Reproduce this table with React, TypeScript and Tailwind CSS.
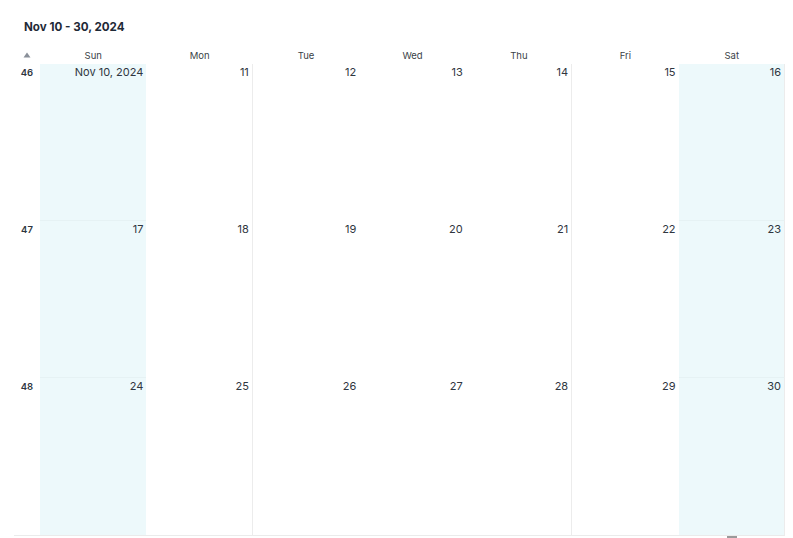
import React from 'react';

const days = ['Sun', 'Mon', 'Tue', 'Wed', 'Thu', 'Fri', 'Sat'];

const weeks = [
  { num: 46, dates: ['Nov 10, 2024', '11', '12', '13', '14', '15', '16'] },
  { num: 47, dates: ['17', '18', '19', '20', '21', '22', '23'] },
  { num: 48, dates: ['24', '25', '26', '27', '28', '29', '30'] },
];

const colBorder = (i: number) => {
  if (i === 1 || i === 4 || i === 6) return 'border-r border-[#ececec]';
  return '';
};

export default function App() {
  return (
    <div className="w-[793px] h-[538px] bg-white overflow-hidden relative" style={{ fontFamily: 'Inter, "Noto Sans", sans-serif' }}>
      <div className="pl-[14px] pr-[8px]">
        <div className="h-[46px] flex items-end pl-[10px] pb-[12px]">
          <h1 className="text-[11.6px] font-bold text-[#1f2a37] leading-none">Nov 10 - 30, 2024</h1>
        </div>
        <div className="flex h-[18px] items-center">
          <div className="w-[26px] flex justify-center">
            <svg width="8" height="6" viewBox="0 0 8 6"><path d="M4 0.5 L7.5 5.5 L0.5 5.5 Z" fill="#8a9099" /></svg>
          </div>
          <div className="grid grid-cols-7 flex-1">
            {days.map((d) => (
              <div key={d} className="text-center text-[9.5px] text-[#3a3f47] pt-[3px]">{d}</div>
            ))}
          </div>
        </div>
        <div className="border-b border-[#ebebeb]">
          {weeks.map((w, wi) => (
            <div key={w.num} className="flex h-[157px]">
              <div className="w-[26px] flex justify-center pt-[2px] text-[9.5px] font-semibold text-[#2f3640]">{w.num}</div>
              <div className="grid grid-cols-7 flex-1">
                {w.dates.map((d, i) => (
                  <div
                    key={d}
                    className={`${i === 0 || i === 6 ? 'bg-[#edf9fb]' : ''} ${colBorder(i)} ${wi > 0 ? (i === 0 || i === 6 ? 'border-t border-t-[#e6f2f4] -mt-px' : 'border-t border-t-transparent -mt-px') : ''} text-right pr-[3px] text-[11px] leading-[16px] text-[#2f3640]`}
                  >
                    {d}
                  </div>
                ))}
              </div>
            </div>
          ))}
        </div>
      </div>
      <div className="absolute left-[727px] top-[536px] w-[10px] h-[2px] bg-[#9a9a9a]" />
    </div>
  );
}
